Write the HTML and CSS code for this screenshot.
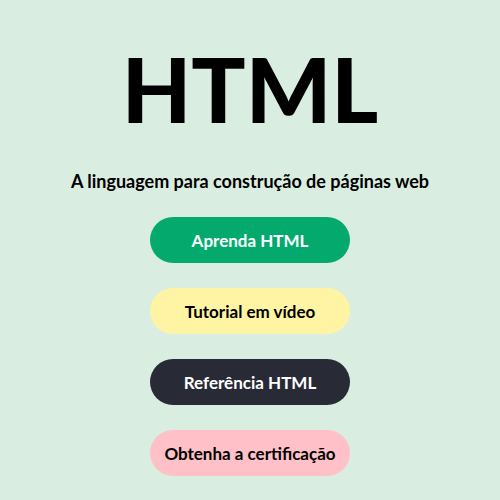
FILE: index.html
```html
<!DOCTYPE html>
<html lang="pt">
<head>
<meta charset="utf-8">
<link rel="stylesheet" href="styles.css">
</head>
<body>
<main class="hero">
  <h1 class="title">HTML</h1>
  <p class="subtitle">A linguagem para construção de páginas web</p>
  <div class="actions">
    <a class="btn btn-green">Aprenda HTML</a>
    <a class="btn btn-yellow">Tutorial em vídeo</a>
    <a class="btn btn-dark">Referência HTML</a>
    <a class="btn btn-pink">Obtenha a certificação</a>
  </div>
</main>
</body>
</html>
```
FILE: styles.css
```css
html, body {
  margin: 0;
  padding: 0;
  background: #D9EEE1;
  width: 500px;
  height: 500px;
  overflow: hidden;
}
.hero {
  display: flex;
  flex-direction: column;
  align-items: center;
  font-family: Lato, "Liberation Sans", sans-serif;
  color: #000;
}
.title {
  margin: 38px 0 0;
  font-size: 90px;
  line-height: 100px;
  font-weight: 900;
}
.subtitle {
  margin: 31px 0 0;
  font-size: 18px;
  line-height: 24px;
  font-weight: 700;
}
.actions {
  display: flex;
  flex-direction: column;
  align-items: center;
  gap: 25px;
  margin-top: 24px;
}
.btn {
  width: 200px;
  height: 46px;
  border-radius: 25px;
  display: flex;
  align-items: center;
  justify-content: center;
  font-size: 17px;
  font-weight: 700;
  text-decoration: none;
}
.btn-green { background: #04AA6D; color: #fff; }
.btn-yellow { background: #FFF4A3; color: #000; }
.btn-dark { background: #282A35; color: #fff; }
.btn-pink { background: #FFC0C7; color: #000; }
```
